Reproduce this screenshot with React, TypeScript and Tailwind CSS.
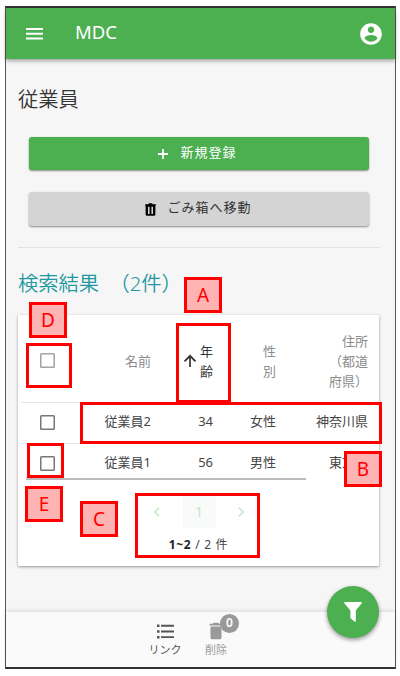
import React from "react";

function Icon({ d, className }: { d: string; className: string }) {
  return (
    <svg viewBox="0 0 24 24" fill="currentColor" className={`block shrink-0 ${className}`}>
      <path d={d} />
    </svg>
  );
}

const TRASH = "M19 4h-3.500l-1-1h-5l-1 1H5v2h14V4M6 19a2 2 0 0 0 2 2h8a2 2 0 0 0 2-2V7H6v12z";
const TRASH_LINED =
  "M3.500 3.500h5L9.500 2h5l1 1.500h5V6h-.7v14a2 2 0 0 1-2 2H6.200a2 2 0 0 1-2-2V6h-.7V3.500M8 7.500v11.500h2.500V7.500H8m5.500 0v11.500H16V7.500h-2.500z";
const USER =
  "M12 2C6.480 2 2 6.480 2 12s4.480 10 10 10 10-4.480 10-10S17.520 2 12 2zm0 3c1.660 0 3 1.340 3 3s-1.340 3-3 3-3-1.340-3-3 1.340-3 3-3zm0 14.200c-2.500 0-4.710-1.280-6-3.220.03-1.990 4-3.080 6-3.080 1.990 0 5.970 1.090 6 3.080-1.290 1.940-3.500 3.220-6 3.220z";

function Checkbox({ light = false }: { light?: boolean }) {
  return (
    <svg
      viewBox="0 0 15 15"
      fill="none"
      stroke="currentColor"
      strokeWidth="1.500"
      className={`ml-[22px] block h-[15px] w-[15px] ${light ? "text-[#a3a3a3]" : "text-[#777]"}`}
    >
      <rect x=".75" y=".75" width="13.500" height="13.500" rx=".8" />
    </svg>
  );
}

function Row({ cells }: { cells: string[] }) {
  return (
    <div className="ml-[3px] mr-[3px] grid h-[41px] grid-cols-[43px_87px_62px_63px_1fr] items-center border-t border-[#e6e6e6] pb-[2px] pr-[8px] text-right text-[13px] text-[#444]">
      <div className="-ml-[3px]">
        <Checkbox />
      </div>
      {cells.map((c) => (
        <div key={c} className="whitespace-nowrap">
          {c}
        </div>
      ))}
    </div>
  );
}

function Tag({ label, place }: { label: string; place: string }) {
  return (
    <div
      className={`absolute flex h-[36px] w-[38px] items-center justify-center border-[3px] border-[#f00] bg-[#ffb3b3] text-[19px] leading-none text-[#f00] ${place}`}
    >
      {label}
    </div>
  );
}

function Outline({ place }: { place: string }) {
  return <div className={`absolute border-[3px] border-[#f00] ${place}`} />;
}

export default function App() {
  return (
    <div className="relative h-[676px] w-[400px] overflow-hidden bg-white pl-[5px] pt-[6px] font-['Noto_Sans','Noto_Sans_CJK_JP',sans-serif] text-[#333]">
      <div className="flex h-[663px] w-[391px] flex-col border border-t-2 border-b-2 border-[#555] border-t-[#333] border-b-[#333] bg-[#f6f6f6]">
        <header className="z-10 flex h-[51px] shrink-0 items-center bg-[#4caf50] pl-[20px] pr-[11px] text-white shadow-[0_2px_4px_rgba(0,0,0,0.35)]">
          <svg viewBox="0 0 17 12" className="h-[12px] w-[17px]" fill="currentColor">
            <path d="M0 0h17v2H0zM0 4.700h17v2H0zM0 9.400h17v2H0z" />
          </svg>
          <span className="-mt-[3px] ml-[32px] text-[18.500px]">MDC</span>
          <Icon d={USER} className="ml-auto h-[26px] w-[26px]" />
        </header>

        <main className="flex min-h-0 flex-1 flex-col px-[12px]">
          <h1 className="mt-[25px] h-[30px] text-[20.300px] font-[350] leading-[30px]">従業員</h1>
          <button className="ml-[11px] mt-[23px] flex h-[33px] w-[340px] shrink-0 items-center justify-center rounded-[3px] bg-[#4caf50] pr-[3px] text-[13px] tracking-[1px] text-white shadow-[0_1px_2px_rgba(0,0,0,0.45)]">
            <svg viewBox="0 0 10 10" className="mr-[12px] h-[10px] w-[10px]" fill="currentColor">
              <path d="M4.100 0h1.800v4.100H10v1.800H5.900V10H4.100V5.900H0V4.100h4.100z" />
            </svg>
            <span className="-mt-[2px]">新規登録</span>
          </button>
          <button className="ml-[11px] mt-[22px] flex h-[34px] w-[340px] shrink-0 items-center justify-center rounded-[3px] bg-[#d4d4d4] pr-[3px] text-[13px] tracking-[1px] text-[#333] shadow-[0_1px_2px_rgba(0,0,0,0.45)]">
            <Icon d={TRASH_LINED} className="mr-[9px] h-[15px] w-[15px] text-black" />
            <span className="-mt-[2px]">ごみ箱へ移動</span>
          </button>
          <div className="mt-[21px] h-px w-[362px] shrink-0 bg-[#e2e2e2]" />
          <h2 className="mt-[20px] h-[30px] shrink-0 whitespace-pre text-[20.300px] font-[350] leading-[30px] text-[#1e98a1] [word-spacing:5px]">
            検索結果 （2件）
          </h2>

          <section className="mt-[17px] flex h-[251px] w-[361px] shrink-0 flex-col rounded-[1px] bg-white shadow-[0_1px_3px_rgba(0,0,0,0.4)]">
            <div className="grid h-[87px] shrink-0 grid-cols-[46px_87px_62px_63px_1fr] items-center pr-[11px] pt-[4px] text-right text-[13px] leading-[20px] text-[#8b8b8b]">
              <div>
                <Checkbox light />
              </div>
              <div>名前</div>
              <div className="flex items-center justify-end text-[#333]">
                <svg viewBox="0 0 14 14" className="mr-[3px] h-[14px] w-[14px]" fill="none" stroke="currentColor" strokeWidth="1.700">
                  <path d="M7 13V2M1.500 7.300 7 1.800l5.500 5.500" />
                </svg>
                <span className="w-[13px]">年齢</span>
              </div>
              <div className="ml-auto w-[13px]">性別</div>
              <div>
                住所
                <br />
                （都道
                <br />
                府県）
              </div>
            </div>
            <Row cells={["従業員2", "34", "女性", "神奈川県"]} />
            <Row cells={["従業員1", "56", "男性", "東京都"]} />
            <div className="-mt-[6px] ml-[8px] h-[2px] w-[280px] shrink-0 bg-[#bbb]" />
            <div className="mt-[16px] flex h-[32px] w-full shrink-0 items-center justify-center text-[15px] text-[#c9e9ca]">
              <Icon d="M15.410 7.410 14 6l-6 6 6 6 1.410-1.410L10.830 12z" className="h-[20px] w-[20px]" />
              <span className="ml-[16px] mr-[15px] flex h-[32px] w-[33px] items-center justify-center bg-[#f8fbfa] pb-[2px]">1</span>
              <Icon d="M10 6 8.590 7.410 13.170 12l-4.580 4.590L10 18l6-6z" className="h-[20px] w-[20px]" />
            </div>
            <div className="mt-[8px] text-center text-[12px] leading-[18px] tracking-[0.700px] text-[#444]">
              <b className="text-[#222]">1~2</b> / 2 件
            </div>
          </section>
        </main>

        <footer className="flex h-[55px] shrink-0 bg-[#fafafa] pl-[135px] text-[11px] text-[#555] shadow-[0_-1px_5px_rgba(0,0,0,0.12)]">
          <div className="flex w-[48px] flex-col items-center pt-[12px]">
            <svg viewBox="0 0 17 15" className="h-[15px] w-[17px]" fill="currentColor">
              <path d="M0 .5h2.500v2.500H0zM4 .8h13v1.900H4zM0 6.200h2.500v2.500H0zM4 6.500h13v1.900H4zM0 11.900h2.500v2.500H0zM4 12.200h13v1.900H4z" />
            </svg>
            <span className="mt-[2px] leading-[18px]">リンク</span>
          </div>
          <div className="ml-[7px] flex w-[40px] flex-col items-center pt-[8px] text-[#999]">
            <div className="relative">
              <Icon d={TRASH} className="h-[22px] w-[22px]" />
              <span className="absolute -top-[6px] left-[15px] flex h-[19px] w-[19px] items-center justify-center rounded-full bg-[#999] pb-px text-[12px] font-semibold text-white">
                0
              </span>
            </div>
            <span className="-mt-px leading-[18px]">削除</span>
          </div>
        </footer>
      </div>

      <button className="absolute left-[327px] top-[586px] z-20 flex h-[52px] w-[52px] items-center justify-center rounded-full bg-[#4caf50] text-white shadow-[0_2px_4px_rgba(0,0,0,0.4)]">
        <svg viewBox="0 0 18 20" className="h-[20px] w-[18px]" fill="currentColor">
          <path d="M.8 0h16.400a.7.7 0 0 1 .5 1.200L11.800 8.500V19a.8.8 0 0 1-1.300.6l-3.700-3.200a1 1 0 0 1-.4-.8V8.500L.3 1.200A.7.7 0 0 1 .8 0z" />
        </svg>
      </button>

      <Outline place="left-[26px] top-[343px] h-[45px] w-[46px]" />
      <Outline place="left-[176px] top-[323px] h-[80px] w-[55px]" />
      <Outline place="left-[80px] top-[402px] h-[42px] w-[302px]" />
      <Outline place="left-[27px] top-[443px] h-[35px] w-[37px]" />
      <Outline place="left-[135px] top-[493px] h-[65px] w-[125px]" />
      <Tag label="D" place="left-[29px] top-[302px]" />
      <Tag label="A" place="left-[184px] top-[277px]" />
      <Tag label="B" place="left-[344px] top-[451px]" />
      <Tag label="E" place="left-[25px] top-[486px]" />
      <Tag label="C" place="left-[80px] top-[501px]" />
    </div>
  );
}
